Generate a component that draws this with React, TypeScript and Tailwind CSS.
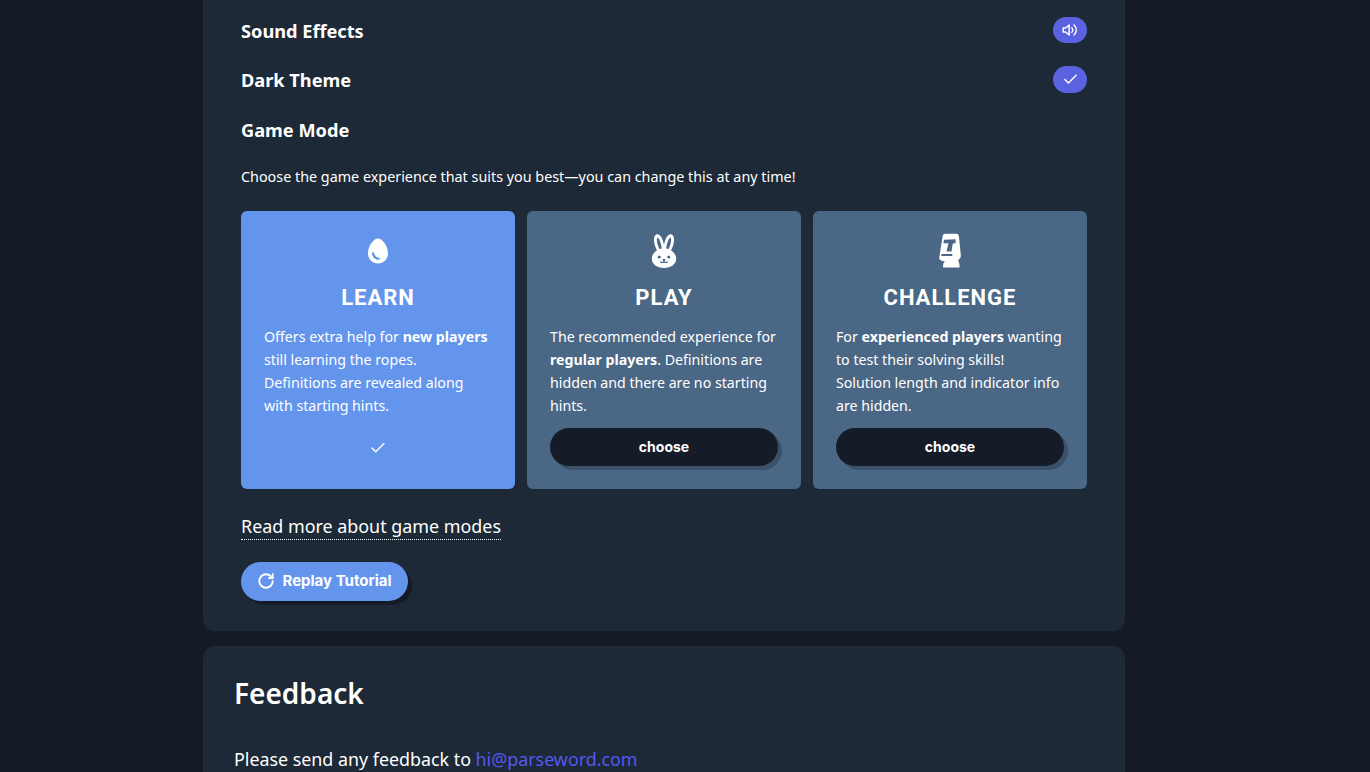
import React from "react";
import { Check, RotateCw } from "lucide-react";

const Egg = () => (
  <svg width="24" height="28" viewBox="0 0 24 28" aria-hidden="true">
    <path fillRule="evenodd" fill="#fff" d="M12 1.5C16.6 1.5 22 9.5 22 16.2 22 22.3 17.6 26.5 12 26.5 6.4 26.5 2 22.3 2 16.2 2 9.5 7.4 1.5 12 1.5ZM6 15.5C5.6 19.8 9 23.2 13.6 22.8L13.6 20.8C10.6 20.9 8.2 18.8 8.2 15.5Z" />
  </svg>
);

const Bunny = () => (
  <svg width="28" height="36" viewBox="0 0 28 36" aria-hidden="true">
    <path fill="#fff" fillRule="evenodd" d="M7.5 1.2C4.2 1.2 3.3 6 4.4 10.5 5 13.2 6 15.6 7 17.4 4 19.1 1.8 22.2 1.8 25.8 1.8 31.4 7.2 35 14 35S26.2 31.4 26.2 25.8C26.2 22.2 24 19.1 21 17.4 22 15.6 23 13.2 23.6 10.5 24.7 6 23.8 1.2 20.5 1.2 17.4 1.2 15 6.5 14 12 13 6.5 10.6 1.2 7.5 1.2ZM7.6 4.4C9.3 5.2 11.3 10.3 11.8 15.6 11 15.6 10.2 15.8 9.5 16 7.6 12.4 5.8 6.2 7.6 4.4ZM20.4 4.4C22.2 6.2 20.4 12.4 18.5 16 17.8 15.8 17 15.6 16.2 15.6 16.7 10.3 18.7 5.2 20.4 4.4ZM9.2 22.4A1.6 1.6 0 1 1 9.2 25.6 1.6 1.6 0 0 1 9.2 22.4ZM18.8 22.4A1.6 1.6 0 1 1 18.8 25.6 1.6 1.6 0 0 1 18.8 22.4ZM12.4 26H15.6L14.8 27.4V28.2C15 29.2 16.6 29.2 17 28.2L18.2 28.7C17.6 30.2 15.4 30.6 14 29.4 12.6 30.6 10.4 30.2 9.8 28.7L11 28.2C11.4 29.2 13 29.2 13.2 28.2V27.4Z" />
  </svg>
);

const Moai = () => (
  <svg width="22" height="36" viewBox="0 0 22 36" aria-hidden="true">
    <path fill="#fff" fillRule="evenodd" d="M6 .8H17C19 .8 19.8 2 20 4L21.8 22C22 24.5 21 26 19.5 26.5V29C20.5 30 20.5 31 20.5 34.5H4C4 31 4.5 29.5 6 28.5 2 28 0 27 .2 25L3.5 4C3.8 2 4.5 .8 6 .8ZM5 6.7 4.4 10.3H9.5L7.5 18.5H12.5L13.6 11.5C13.7 10.6 14.4 10.3 16 10.3H16.6V6.3ZM2.6 21 2.3 23H13.3V21Z" />
  </svg>
);

const Speaker = () => (
  <svg width="16" height="14" viewBox="0 0 16 14" aria-hidden="true">
    <path fill="none" stroke="#fff" strokeWidth="1.5" strokeLinejoin="round" d="M1.2 5H3.6L7.2 2V12L3.6 9H1.2Z" />
    <path fill="none" stroke="#fff" strokeWidth="1.4" strokeLinecap="round" d="M9.8 4.8A3 3 0 0 1 9.8 9.2M12 2A6.6 6.6 0 0 1 12 12" />
  </svg>
);

function Mode({ icon, title, active, children }: { icon: React.ReactNode; title: string; active?: boolean; children: React.ReactNode }) {
  return (
    <div className={`flex h-[278px] w-[274px] flex-col items-center rounded-[6px] px-[23px] pt-[21px] text-white ${active ? "bg-[#6495ed]" : "bg-[#4a6785]"}`}>
      <div className="flex h-[38px] items-center justify-center">{icon}</div>
      <h3 className="mt-[14px] text-[22px] leading-[28px] font-bold tracking-[1px] font-['Roboto',sans-serif]">{title}</h3>
      <p className="mt-[13px] h-[92px] w-full text-[14.2px] leading-[23px]">{children}</p>
      {active ? (
        <div className="mt-[12px] flex h-[38px] items-center justify-center pt-[1px]">
          <Check size={18} strokeWidth={2} color="#fff" />
        </div>
      ) : (
        <button className="mt-[11px] h-[38px] w-full rounded-full bg-[#151c27] text-[14px] font-bold shadow-[4px_4px_0_#3b5069] font-['Inter',sans-serif]">choose</button>
      )}
    </div>
  );
}

function Row({ label, className, children }: { label: string; className: string; children?: React.ReactNode }) {
  return (
    <div className={`flex items-center justify-between ${className}`}>
      <h4 className="text-[18.2px] leading-[27px] font-bold">{label}</h4>
      {children}
    </div>
  );
}

export default function App() {
  return (
    <div className="h-[772px] overflow-hidden bg-[#151b26] font-['Noto_Sans','Open_Sans',sans-serif] text-white">
      <div className="ml-[203px] flex w-[922px] flex-col gap-[15px]">
        <section className="h-[631px] rounded-b-[12px] bg-[#1d2937] px-[38px] pt-[7px]">
          <Row label="Sound Effects" className="h-[48.5px]">
            <span className="mb-[3px] flex h-[26px] w-[34px] items-center justify-center rounded-full bg-[#5b62e0]">
              <Speaker />
            </span>
          </Row>
          <Row label="Dark Theme" className="h-[50.5px]">
            <span className="mb-[3px] flex h-[27px] w-[34px] items-center justify-center rounded-full bg-[#5b62e0]">
              <Check size={17} strokeWidth={2} color="#fff" />
            </span>
          </Row>
          <Row label="Game Mode" className="h-[49.5px]" />
          <p className="mt-[10px] text-[14.35px] leading-[22px]">Choose the game experience that suits you best—you can change this at any time!</p>
          <div className="mt-[23px] flex gap-[12px]">
            <Mode icon={<Egg />} title="LEARN" active>
              Offers extra help for <b>new players</b> still learning the ropes. Definitions are revealed along with starting hints.
            </Mode>
            <Mode icon={<Bunny />} title="PLAY">
              The recommended experience for <b>regular players</b>. Definitions are hidden and there are no starting hints.
            </Mode>
            <Mode icon={<Moai />} title="CHALLENGE">
              For <b>experienced players</b> wanting to test their solving skills!<br />Solution length and indicator info are hidden.
            </Mode>
          </div>
          <a className="mt-[25px] block w-fit border-b border-dotted border-white text-[17.9px] leading-[25px]">Read more about game modes</a>
          <button className="mt-[22px] flex h-[39px] w-[167px] items-center justify-center gap-[7px] rounded-full bg-[#6495ed] text-[15px] font-bold shadow-[4px_4px_0_#151b26] font-['Inter',sans-serif]">
            <RotateCw size={18} strokeWidth={2.5} color="#fff" />
            Replay Tutorial
          </button>
        </section>
        <section className="h-[200px] rounded-[12px] bg-[#1d2937] px-[31px] pt-[26px]">
          <h2 className="text-[28px] leading-[42px] font-semibold">Feedback</h2>
          <p className="mt-[32px] text-[17.85px] leading-[27px]">
            Please send any feedback to <a className="text-[#5558ee]">hi@parseword.com</a>
          </p>
        </section>
      </div>
    </div>
  );
}
